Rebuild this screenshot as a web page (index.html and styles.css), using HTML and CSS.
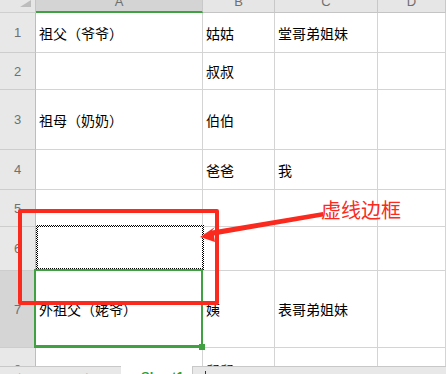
FILE: index.html
```html
<!DOCTYPE html>
<html lang="zh-CN">

<head>
    <meta charset="UTF-8" />
    <title>虚线边框</title>
    <link rel="stylesheet" href="styles.css">
</head>

<body>
    <div class="page">
        <div class="sheet">
            <div class="corner"><span class="corner-tri"></span></div>
            <div class="hd active">A</div>
            <div class="hd">B</div>
            <div class="hd">C</div>
            <div class="hd">D</div>

            <div class="rh">1</div>
            <div class="c">祖父（爷爷）</div>
            <div class="c">姑姑</div>
            <div class="c">堂哥弟姐妹</div>
            <div class="c"></div>

            <div class="rh">2</div>
            <div class="c"></div>
            <div class="c">叔叔</div>
            <div class="c"></div>
            <div class="c"></div>

            <div class="rh">3</div>
            <div class="c">祖母（奶奶）</div>
            <div class="c">伯伯</div>
            <div class="c"></div>
            <div class="c"></div>

            <div class="rh">4</div>
            <div class="c"></div>
            <div class="c">爸爸</div>
            <div class="c">我</div>
            <div class="c"></div>

            <div class="rh">5</div>
            <div class="c"></div>
            <div class="c"></div>
            <div class="c"></div>
            <div class="c"></div>

            <div class="rh">6</div>
            <div class="c copied"><span class="ants"></span></div>
            <div class="c"></div>
            <div class="c"></div>
            <div class="c"></div>

            <div class="rh active">7</div>
            <div class="c selected">外祖父（姥爷）<span class="sel"></span></div>
            <div class="c">姨</div>
            <div class="c">表哥弟姐妹</div>
            <div class="c"></div>

            <div class="rh">8</div>
            <div class="c"></div>
            <div class="c">舅舅</div>
            <div class="c"></div>
            <div class="c"></div>
        </div>

        <div class="tabbar">
            <div class="tab-nav">
                <span>|&lt;</span>
                <span>&lt;</span>
                <span>&gt;</span>
                <span>&gt;|</span>
            </div>
            <div class="tab current">Sheet1</div>
            <div class="tab-rest"><span class="caret"></span></div>
        </div>

        <!-- annotation drawn over the screenshot -->
        <div class="note-box"></div>
        <svg class="note-arrow" width="446" height="374" viewBox="0 0 446 374">
            <polygon points="200,237 215,227 212,230.5 323,212 323,216.5 214,235.5 215,242" fill="#fb2a1e" />
        </svg>
        <div class="note-text">虚线边框</div>
    </div>
</body>

</html>
```

FILE: styles.css
```css
* {
    margin: 0;
    padding: 0;
    box-sizing: border-box;
}

body {
    font-family: 'Noto Sans CJK SC', 'Noto Sans', sans-serif;
    background: #ffffff;
    color: #000000;
    overflow: hidden;
    width: 446px;
    height: 374px;
}

.page {
    position: relative;
    width: 446px;
    height: 374px;
    overflow: hidden;
}

/* Grid */
.sheet {
    display: grid;
    grid-template-columns: 36px 167px 72px 103px 1fr;
    grid-template-rows: 13px 40px 37px 60px 40px 37px 44px 77px 44px;
    height: 366px;
    overflow: hidden;
}

.corner,
.hd,
.rh,
.c {
    border-right: 1px solid #d4d4d4;
    border-bottom: 1px solid #d4d4d4;
}

.corner {
    background: #e6e6e6;
    border-right-color: #c4c4c4;
    border-bottom-color: #cfcfcf;
    display: flex;
    justify-content: flex-end;
    align-items: flex-end;
    padding: 0 4px 5px 0;
}

.corner-tri {
    width: 11px;
    height: 7px;
    background: #bdbdbd;
    clip-path: polygon(100% 0, 100% 100%, 0 100%);
}

.hd {
    background: #e6e6e6;
    border-right-color: #c8c8c8;
    border-bottom-color: #c4c4c4;
    font-family: 'Liberation Sans', sans-serif;
    font-size: 13px;
    line-height: 4px;
    color: #6f6f6f;
    text-align: center;
}

.hd.active {
    background: #d4d4d4;
    border-bottom: 2px solid #3fa142;
}

.rh {
    background: #e8e8e8;
    border-right-color: #bdbdbd;
    border-bottom-color: #cdcdcd;
    font-family: 'Liberation Sans', sans-serif;
    font-size: 13px;
    color: #707070;
    display: flex;
    align-items: center;
    justify-content: center;
}

.rh.active {
    background: #d5d5d5;
}

.c {
    display: flex;
    align-items: center;
    padding-left: 3px;
    font-size: 14px;
    white-space: nowrap;
}

.copied,
.selected {
    position: relative;
}

/* Marching ants around copied cell */
.ants {
    position: absolute;
    left: 0;
    top: -2px;
    right: -2px;
    bottom: 0;
    background: repeating-conic-gradient(#000000 0 25%, #ffffff 0 50%) 0 0 / 2px 2px;
}

.ants::after {
    content: '';
    position: absolute;
    inset: 2px;
    background: #ffffff;
}

/* Active cell */
.sel {
    position: absolute;
    left: -2px;
    top: -2px;
    right: -1px;
    bottom: -1px;
    border: 2px solid #3fa142;
    border-bottom-width: 3px;
}

.sel::after {
    content: '';
    position: absolute;
    right: -4px;
    bottom: -5px;
    width: 6px;
    height: 6px;
    background: #3fa142;
}

/* Sheet tabs */
.tabbar {
    display: flex;
    height: 30px;
    background: #ffffff;
}

.tab-nav {
    width: 121px;
    background: #e8e8e8;
    border-top: 1px solid #c8c8c8;
    display: flex;
    gap: 12px;
    padding: 4px 0 0 18px;
    font-family: 'Liberation Sans', sans-serif;
    font-size: 12px;
    color: #b9b9b9;
}

.tab.current {
    width: 71px;
    background: #ffffff;
    padding: 3px 0 0 20px;
    font-family: 'Liberation Sans', sans-serif;
    font-weight: bold;
    font-size: 13px;
    color: #2f9a3c;
}

.tab-rest {
    flex: 1;
    background: #e8e8e8;
    border-top: 1px solid #c8c8c8;
    border-left: 1px solid #c8c8c8;
    padding: 4px 0 0 12px;
}

.caret {
    display: block;
    width: 1px;
    height: 20px;
    background: #333333;
}

/* Annotation */
.note-box {
    position: absolute;
    left: 18px;
    top: 209px;
    width: 201px;
    height: 96px;
    border: 4px solid #fb2a1e;
    border-radius: 2px;
}

.note-arrow {
    position: absolute;
    left: 0;
    top: 0;
}

.note-text {
    position: absolute;
    left: 321px;
    top: 199px;
    font-size: 20px;
    line-height: 22px;
    color: #fb2a1e;
}
```
